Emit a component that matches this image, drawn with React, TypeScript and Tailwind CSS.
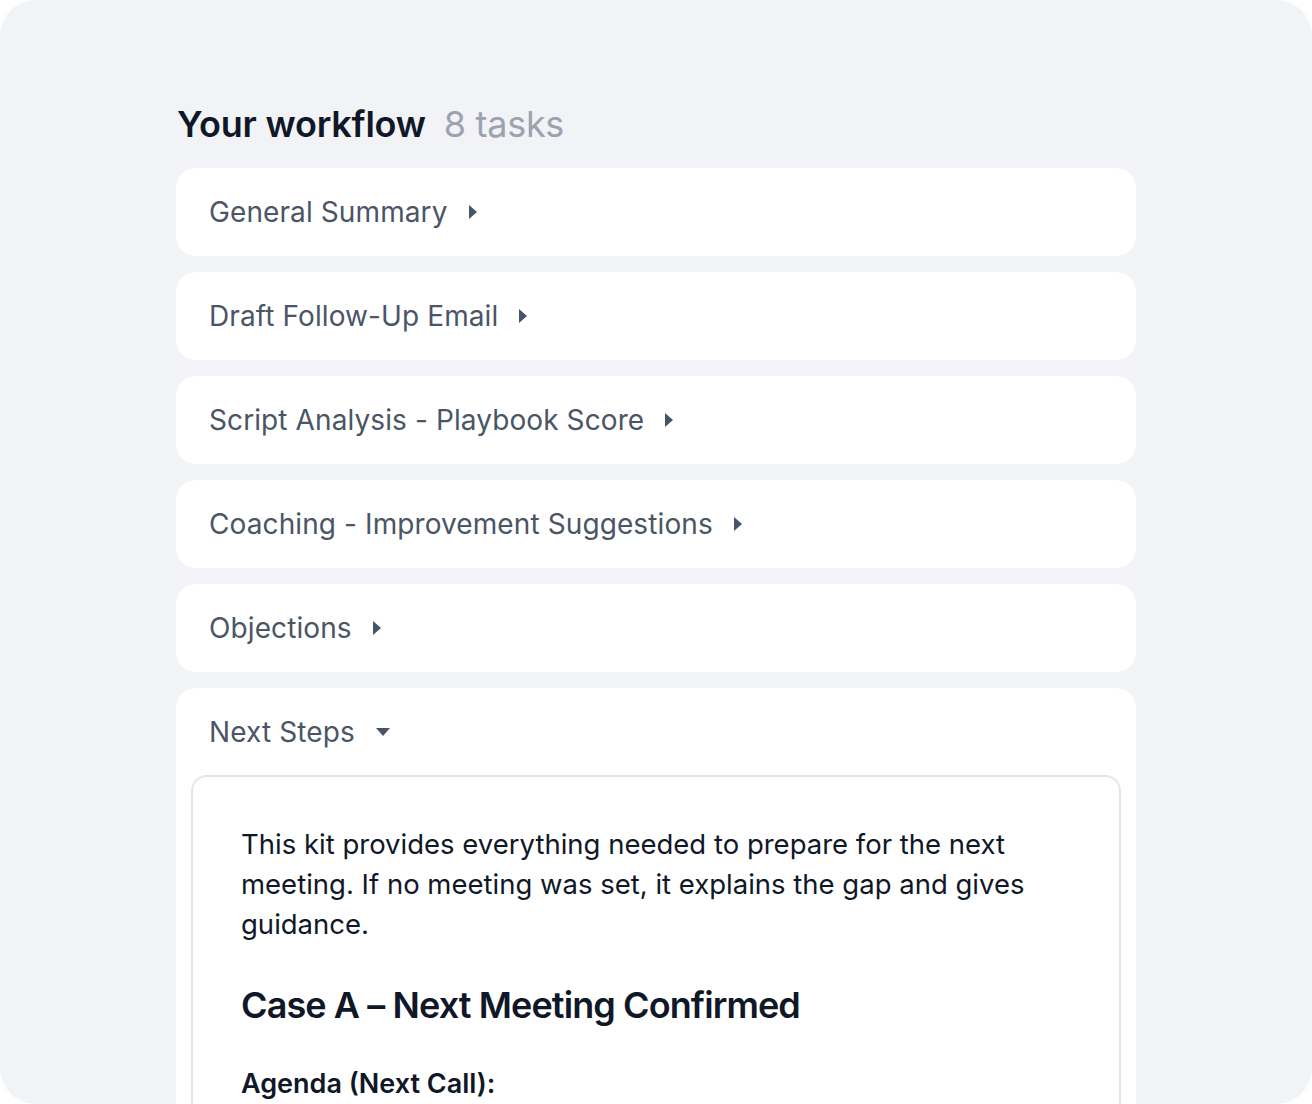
const TASKS = [
  'General Summary',
  'Draft Follow-Up Email',
  'Script Analysis - Playbook Score',
  'Coaching - Improvement Suggestions',
  'Objections',
];

function Caret({ open }: { open?: boolean }) {
  if (open) {
    return (
      <svg width="14" height="8" viewBox="0 0 14 8" className="shrink-0">
        <path d="M0 0 L14 0 L7 8 Z" fill="#475467" />
      </svg>
    );
  }
  return (
    <svg width="8" height="14" viewBox="0 0 8 14" className="shrink-0">
      <path d="M0 0 L8 7 L0 14 Z" fill="#475467" />
    </svg>
  );
}

export default function App() {
  return (
    <div className="bg-white" style={{ fontFamily: 'Inter, "Noto Sans", sans-serif' }}>
      <div className="h-[1104px] w-full overflow-hidden rounded-[36px] bg-[#f2f3f7] pl-[176px] pt-[100px]">
        <div className="w-[960px]">
          <div className="mb-[20px] flex items-baseline gap-[18px] pl-[1px]">
            <h1 className="text-[36px] font-semibold leading-[48px] tracking-[-0.2px] text-[#101828]">Your workflow</h1>
            <span className="text-[36px] leading-[48px] tracking-[-0.3px] text-[#9ca3af]">8 tasks</span>
          </div>

          <div className="flex flex-col gap-4">
            {TASKS.map((t) => (
              <div key={t} className="flex h-[88px] items-center gap-[21px] rounded-[20px] bg-white px-[33px]">
                <span className="text-[28px] leading-[36px] tracking-[0.1px] text-[#4a5565]">{t}</span>
                <Caret />
              </div>
            ))}

            <div className="rounded-[20px] bg-white px-[15px] pb-10">
              <div className="flex h-[87px] items-center gap-[21px] px-[18px]">
                <span className="text-[28px] leading-[36px] tracking-[0.1px] text-[#4a5565]">Next Steps</span>
                <Caret open />
              </div>
              <div className="rounded-2xl border-2 border-[#e4e5ea] pl-[48px] pr-[40px] pt-[47px] pb-12">
                <p className="text-[27.5px] leading-[40px] text-[#101828]">
                  This kit provides everything needed to prepare for the next meeting. If no meeting was set, it
                  explains the gap and gives guidance.
                </p>
                <h2 className="mt-[39px] text-[36px] font-semibold leading-[44px] tracking-[-0.9px] text-[#101828]">
                  Case A – Next Meeting Confirmed
                </h2>
                <h3 className="mt-[41px] text-[27px] font-semibold leading-[32px] text-[#101828]">Agenda (Next Call):</h3>
                <ul className="mt-4 list-disc pl-8 text-[27.5px] leading-[40px] text-[#101828]">
                  <li>Recap of the previous conversation</li>
                </ul>
              </div>
            </div>
          </div>
        </div>
      </div>
    </div>
  );
}
